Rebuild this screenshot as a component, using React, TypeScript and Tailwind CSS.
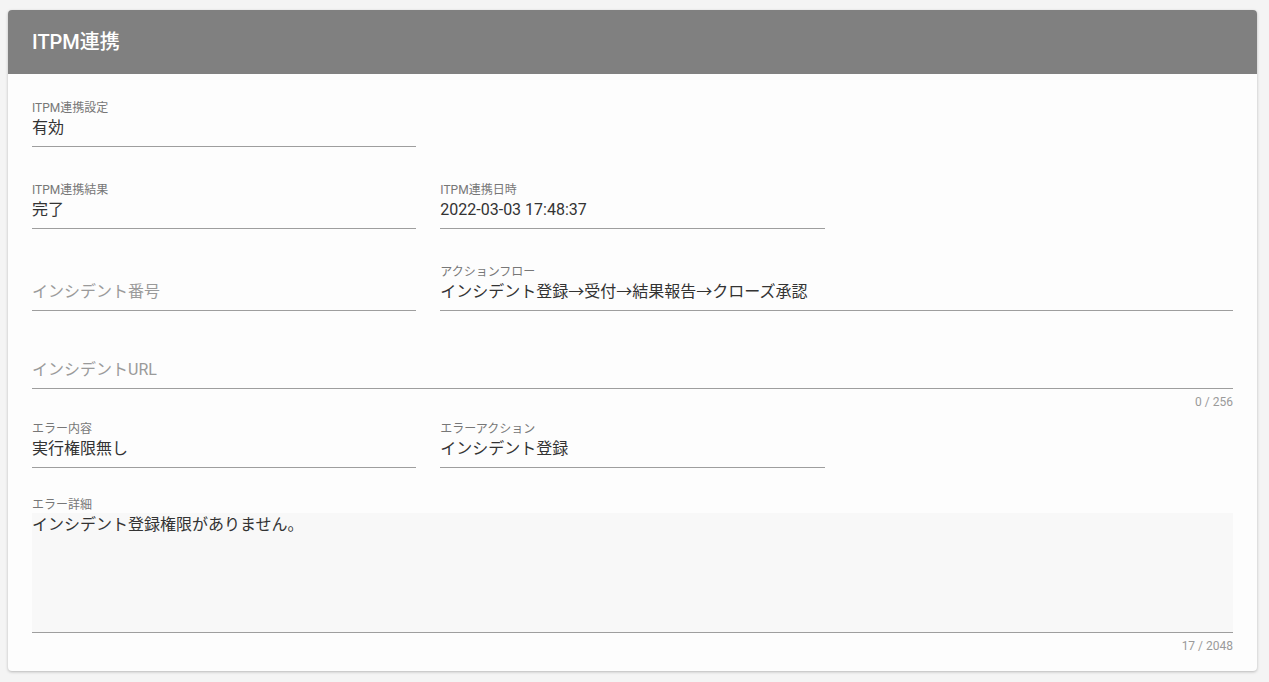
import React from "react"

const font = { fontFamily: "Roboto, 'Noto Sans CJK JP', sans-serif" }

interface FieldProps {
  label?: string
  value?: string
  placeholder?: string
  className?: string
}

function Field({ label, value, placeholder, className = "" }: FieldProps) {
  return (
    <div className={className}>
      <div className="h-4 text-xs leading-4 text-[#777777]">{label ?? ""}</div>
      <div className="mt-0.5 border-b border-[#9e9e9e] pb-2">
        <div className={`h-5 text-base leading-5 ${value ? "text-[#333333]" : "text-[#9a9a9a]"}`}>
          {value ?? placeholder}
        </div>
      </div>
    </div>
  )
}

export default function App() {
  return (
    <div className="min-h-screen bg-[#f4f4f4] pt-2.5 pr-3 pb-3 pl-2" style={font}>
      <div className="overflow-hidden rounded bg-[#fdfdfd] shadow-[0_1px_3px_rgba(0,0,0,0.25)]">
        <div className="flex h-16 items-center bg-[#808080] px-6">
          <h1 className="text-xl font-medium text-white">ITPM連携</h1>
        </div>

        <div className="px-6 pt-[26px] pb-[17px]">
          <div className="grid grid-cols-3 gap-x-6">
            <Field label="ITPM連携設定" value="有効" />
          </div>

          <div className="mt-[35px] grid grid-cols-3 gap-x-6">
            <Field label="ITPM連携結果" value="完了" />
            <Field label="ITPM連携日時" value="2022-03-03 17:48:37" />
          </div>

          <div className="mt-[35px] grid grid-cols-3 gap-x-6">
            <Field placeholder="インシデント番号" />
            <Field className="col-span-2" label="アクションフロー" value="インシデント登録→受付→結果報告→クローズ承認" />
          </div>

          <div className="mt-[31px]">
            <Field placeholder="インシデントURL" />
            <div className="mt-[5px] h-4 text-right text-xs leading-4 text-[#9a9a9a]">0 / 256</div>
          </div>

          <div className="mt-[11px] grid grid-cols-3 gap-x-6">
            <Field label="エラー内容" value="実行権限無し" />
            <Field label="エラーアクション" value="インシデント登録" />
          </div>

          <div className="mt-[29px]">
            <div className="h-4 text-xs leading-4 text-[#777777]">エラー詳細</div>
            <div className="h-[120px] border-b border-[#9e9e9e] bg-[#f8f8f8] pt-0.5 text-base leading-5 text-[#333333]">
              インシデント登録権限がありません。
            </div>
            <div className="mt-[5px] h-4 text-right text-xs leading-4 text-[#9a9a9a]">17 / 2048</div>
          </div>
        </div>
      </div>
    </div>
  )
}
